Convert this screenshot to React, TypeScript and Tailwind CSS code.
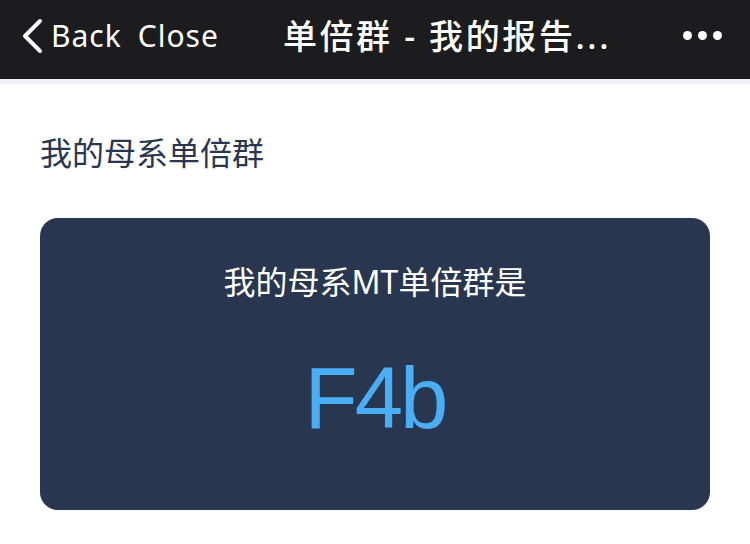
export default function App() {
  return (
    <div
      className="flex h-[544px] w-[750px] flex-col overflow-hidden bg-white"
      style={{ fontFamily: '"Noto Sans", "Noto Sans CJK SC", sans-serif' }}
    >
      <header className="flex h-[79px] items-center bg-[#1c1c1e] pb-[8px] text-white">
        <div className="flex items-center pl-[20px]">
          <svg width="24" height="36" viewBox="0 0 24 36" fill="none">
            <path d="M20 3 L5 18 L20 33" stroke="white" strokeWidth="4" strokeLinecap="round" strokeLinejoin="round" />
          </svg>
          <span className="ml-[7px] text-[30px] leading-none tracking-[1px]">Back</span>
          <span className="ml-[16px] text-[30px] leading-none tracking-[1px]">Close</span>
        </div>
        <h1 className="ml-[64px] text-[34px] font-medium leading-none tracking-[2.6px]">单倍群 - 我的报告...</h1>
        <div className="ml-auto mr-[28px] flex gap-[6px]">
          <span className="h-[9px] w-[9px] rounded-full bg-white" />
          <span className="h-[9px] w-[9px] rounded-full bg-white" />
          <span className="h-[9px] w-[9px] rounded-full bg-white" />
        </div>
      </header>
      <div className="h-[5px] bg-[#eef1f5]" />

      <main className="px-[40px]">
        <h2 className="mt-[49px] text-[32px] leading-[40px] text-[#2a3650]">我的母系单倍群</h2>
        <section className="mt-[45px] flex h-[292px] flex-col items-center rounded-[18px] bg-[#283650]">
          <p className="mt-[44px] text-[32px] leading-[40px] text-white">我的母系MT单倍群是</p>
          <p
            className="mt-[52px] text-[87px] leading-none tracking-[-3px] text-[#4aaef5]"
            style={{ fontFamily: '"Liberation Sans", Arial, sans-serif' }}
          >
            F4b
          </p>
        </section>
      </main>
    </div>
  )
}
